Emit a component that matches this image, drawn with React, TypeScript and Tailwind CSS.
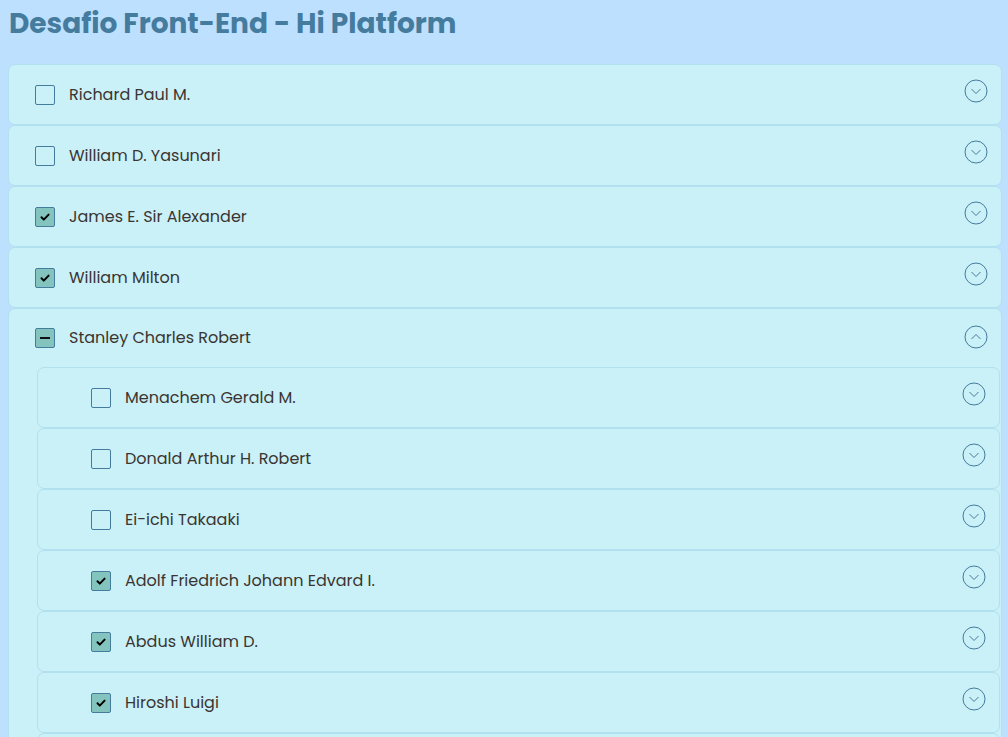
import React, { FC, useState } from "react";

type Person = { id: number; name: string; checked: boolean | "some"; open?: boolean; kids?: Person[] };

const people: Person[] = [
  { id: 1, name: "Richard Paul M.", checked: false },
  { id: 2, name: "William D. Yasunari", checked: false },
  { id: 3, name: "James E. Sir Alexander", checked: true },
  { id: 4, name: "William Milton", checked: true },
  {
    id: 5,
    name: "Stanley Charles Robert",
    checked: "some",
    open: true,
    kids: [
      { id: 6, name: "Menachem Gerald M.", checked: false },
      { id: 7, name: "Donald Arthur H. Robert", checked: false },
      { id: 8, name: "Ei-ichi Takaaki", checked: false },
      { id: 9, name: "Adolf Friedrich Johann Edvard I.", checked: true },
      { id: 10, name: "Abdus William D.", checked: true },
      { id: 11, name: "Hiroshi Luigi", checked: true },
      { id: 12, name: "Carlos Alberto S.", checked: false },
    ],
  },
  { id: 13, name: "Ludwig Johann W.", checked: false },
];

const Box: FC<{ state: boolean | "some" }> = ({ state }) => (
  <span
    className={
      "flex h-5 w-5 shrink-0 items-center justify-center rounded-[2px] border border-[#457b9d] " +
      (state ? "bg-[#83c5be]" : "bg-transparent")
    }
  >
    {state === true && (
      <svg width="12" height="12" viewBox="0 0 12 12">
        <path d="M2.5 6.3l2.3 2.3 4.8-5" fill="none" stroke="#000" strokeWidth="2" strokeLinecap="round" strokeLinejoin="round" />
      </svg>
    )}
    {state === "some" && <span className="h-[2px] w-[10px] bg-[#111]" />}
  </span>
);

const Chevron: FC<{ up?: boolean }> = ({ up }) => (
  <svg width="24" height="24" viewBox="0 0 24 24" className="shrink-0">
    <circle cx="12" cy="12" r="11" fill="none" stroke="#457b9d" strokeWidth="1" />
    {up ? (
      <path d="M7.5 14l4.5-4.5 4.5 4.5" fill="none" stroke="#457b9d" strokeWidth="1" />
    ) : (
      <path d="M7.5 10l4.5 4.5 4.5-4.5" fill="none" stroke="#457b9d" strokeWidth="1" />
    )}
  </svg>
);

const Row: FC<{ p: Person; nested?: boolean }> = ({ p, nested }) => {
  const [open, setOpen] = useState(!!p.open);
  return (
    <div className="rounded-[7px] border border-[#b3e0ee] bg-[#caf0f8]">
      <div
        className={
          "flex items-center justify-between pr-[13px] " +
          (nested ? "h-[59px] pl-[53px]" : open ? "h-[58px] pl-[26px]" : "h-[59px] pl-[26px]")
        }
      >
        <div className="flex items-center gap-[14px]">
          <Box state={p.checked} />
          <span className="text-[16px] text-[#3a3530]">{p.name}</span>
        </div>
        <button onClick={() => setOpen((o) => !o)} className={open ? "mb-[2px]" : "mb-[7px]"}>
          <Chevron up={open} />
        </button>
      </div>
      {open && p.kids && (
        <div className="flex flex-col pl-[28px] pr-[1px]">
          {p.kids.map((k) => (
            <Row key={k.id} p={k} nested />
          ))}
        </div>
      )}
    </div>
  );
}

export default function App() {
  return (
    <div className="min-h-screen bg-[#bde0fe] pl-2 pr-[6px] pt-[4px] font-['Poppins','Inter','Noto_Sans',sans-serif]">
      <h1 className="ml-[1px] text-[28px] font-bold leading-[40px] text-[#457b9d]">
        Desafio Front-End - Hi Platform
      </h1>
      <div className="mt-[20px] flex flex-col">
        {people.map((p) => (
          <Row key={p.id} p={p} />
        ))}
      </div>
    </div>
  );
}
